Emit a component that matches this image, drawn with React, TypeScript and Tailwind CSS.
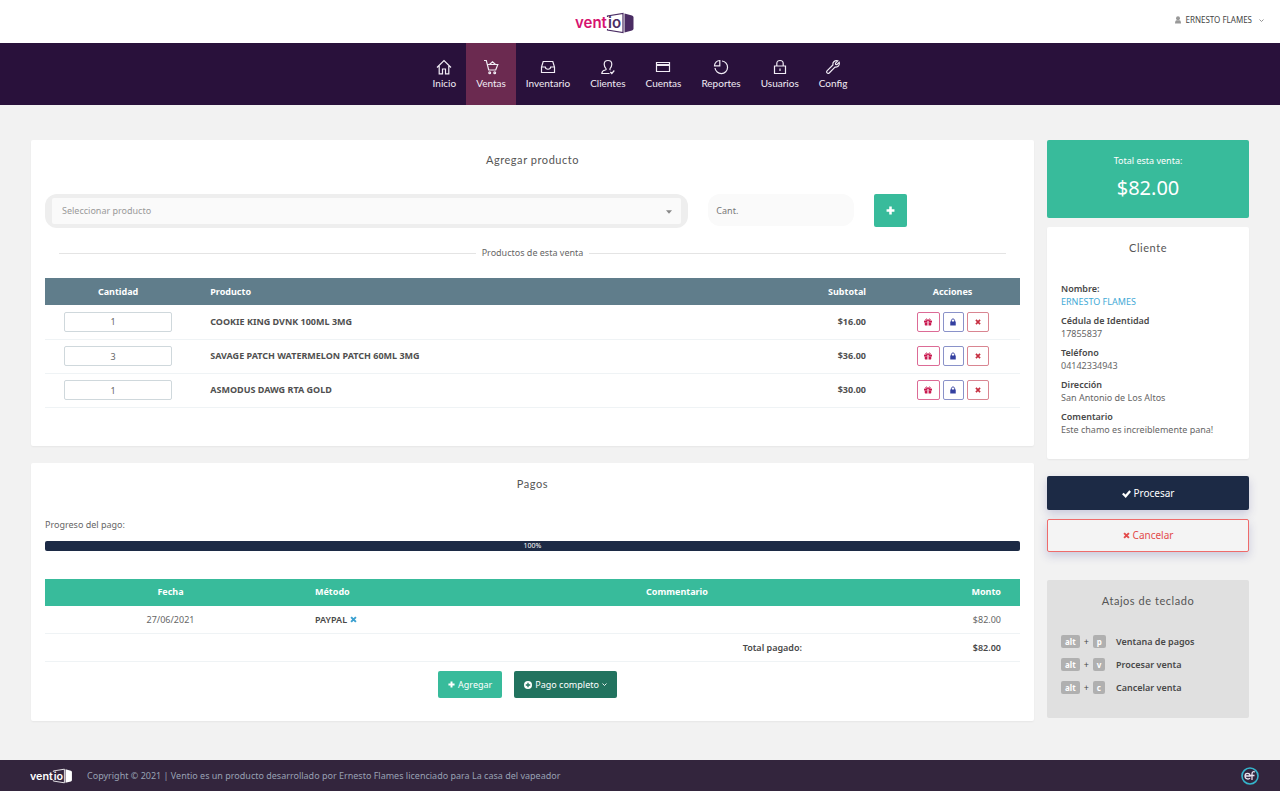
import type { ReactNode } from 'react'

interface Product {
  id: number
  quantity: number
  name: string
  subtotal: string
}

interface NavItem {
  label: string
  icon: ReactNode
  active?: boolean
}

const products: Product[] = [
  { id: 1, quantity: 1, name: 'COOKIE KING DVNK 100ML 3MG', subtotal: '$16.00' },
  { id: 2, quantity: 3, name: 'SAVAGE PATCH WATERMELON PATCH 60ML 3MG', subtotal: '$36.00' },
  { id: 3, quantity: 1, name: 'ASMODUS DAWG RTA GOLD', subtotal: '$30.00' },
]

const shortcuts = [
  { key: 'p', label: 'Ventana de pagos' },
  { key: 'v', label: 'Procesar venta' },
  { key: 'c', label: 'Cancelar venta' },
]

const customer = [
  { label: 'Cédula de Identidad', value: '17855837' },
  { label: 'Teléfono', value: '04142334943' },
  { label: 'Dirección', value: 'San Antonio de Los Altos' },
  { label: 'Comentario', value: 'Este chamo es increiblemente pana!' },
]

const navItems: NavItem[] = [
  { label: 'Inicio', icon: <path d="M1 8.500 8 1.500l7 7M3.200 7v7.800h3.300V10h3v4.800h3.300V7" /> },
  {
    label: 'Ventas',
    active: true,
    icon: (
      <>
        <path d="M1 1.500h2.300l2.400 9.500h7L14.800 5.500H4.300M6.500 5.500 9.500 2.800l3 2.700" />
        <circle cx="6.700" cy="13.800" r="0.900" />
        <circle cx="11.700" cy="13.800" r="0.900" />
      </>
    ),
  },
  {
    label: 'Inventario',
    icon: <path d="M3.200 2.500h9.600l1.700 5.500v5.500h-13V8zM1.500 8H5.300c.3 3 5.100 3 5.400 0h3.800" />,
  },
  {
    label: 'Clientes',
    icon: (
      <path d="M14.300 11.500 11.800 14.500 10.300 13M9.500 14.500H1.800c0-2.500 1.200-3 3.400-3.500 1-.3 1.200-.8.700-1.500C4.700 8 4.200 6.700 4.200 5.300 4.200 3 5.700 1.500 8 1.500s3.800 1.500 3.800 3.800c0 1.400-.5 2.700-1.700 4.200-.4.600-.3 1.100.4 1.400" />
    ),
  },
  { label: 'Cuentas', icon: <path d="M1.500 3.500h13v9h-13zM1.500 5.500h13M1.500 6.500h13" /> },
  {
    label: 'Reportes',
    icon: <path d="M9 2a6.300 6.300 0 1 1-7 7M6.800 1.500v5.300H1.500a5.300 5.300 0 0 1 5.300-5.300z" />,
  },
  {
    label: 'Usuarios',
    icon: <path d="M2.500 7h11v7.500h-11zM4.800 7V4.500c0-4 6.400-4 6.400 0V7M8 9.500v2.500" />,
  },
  {
    label: 'Config',
    icon: (
      <path d="M12.800 1.900 10.500 4.200l.2 1.200 1.200.2 2.300-2.300c.9 2.800-1.200 5.400-4.200 4.800L4.200 14c-1.500 1.300-3.500-.7-2.200-2.200L7.900 6C7.300 3 9.900.9 12.800 1.900z" />
    ),
  },
]

function Cross({ className }: { className: string }) {
  return (
    <svg viewBox="0 0 16 16" className={className} fill="none" stroke="currentColor" strokeWidth="4.500" aria-hidden="true">
      <path d="M2.500 2.500l11 11M13.500 2.500l-11 11" />
    </svg>
  )
}

function Plus({ className }: { className: string }) {
  return (
    <svg viewBox="0 0 16 16" className={className} fill="none" stroke="currentColor" strokeWidth="4.500" aria-hidden="true">
      <path d="M8 1v14M1 8h14" />
    </svg>
  )
}

function Chevron({ className }: { className: string }) {
  return (
    <svg viewBox="0 0 10 10" className={className} fill="none" stroke="currentColor" strokeWidth="1.800" aria-hidden="true">
      <path d="M1 3l4 4 4-4" />
    </svg>
  )
}

function Gift() {
  return (
    <svg viewBox="0 0 16 16" className="size-2" fill="currentColor" aria-hidden="true">
      <path d="M1 5h5.500v4H0V6zM9.500 5H15l1 1v3H9.500zM1.500 9.500h5V15h-4l-1-1zM9.500 9.500h5V14l-1 1h-4z" />
      <path d="M6.500 5h3v10h-3z" fillOpacity="0.35" />
      <path d="M8 5C6.500 1.500 3.500 1 3.500 3.300 3.500 5 6 5 8 5s4.500 0 4.500-1.700C12.500 1 9.500 1.500 8 5z" fill="none" stroke="currentColor" strokeWidth="1.800" />
    </svg>
  )
}

function Lock() {
  return (
    <svg viewBox="0 0 16 16" className="size-2" fill="currentColor" aria-hidden="true">
      <path d="M2.500 7h11v8h-11z" />
      <path d="M4.800 8V5c0-4 6.400-4 6.400 0v3" fill="none" stroke="currentColor" strokeWidth="2" />
    </svg>
  )
}

function Logo({ className, main, accent }: { className: string; main: string; accent: string }) {
  return (
    <svg viewBox="0 0 60 22" className={className} role="img" aria-label="ventio">
      <text x="0" y="16" fontFamily="Inter, sans-serif" fontSize="15" fontWeight="600" fill={accent}>
        vent
      </text>
      <text x="33" y="16" fontFamily="Inter, sans-serif" fontSize="15" fontWeight="600" fill={main}>
        io
      </text>
      <path d="M32.500 5V4L48 1.500v19L32.500 18v-1" fill="none" stroke={main} strokeWidth="1.200" />
      <path d="M49.500 1.500 57 3.500q1.500.5 1.500 2v11q0 1.500-1.500 2l-7.500 2z" fill={main} />
    </svg>
  )
}

function CardTitle({ children }: { children: ReactNode }) {
  return <h2 className="text-center font-[Lato,sans-serif] text-[11px] leading-4 tracking-wider text-[#555]">{children}</h2>
}

function Header() {
  return (
    <header>
      <div className="relative flex h-[43px] items-center justify-center bg-white pr-[70px]">
        <a href="#inicio" className="block pt-[2px]">
          <Logo className="h-[22px] w-[60px]" main="#4a2c63" accent="#d6136f" />
        </a>
        <button type="button" className="absolute right-4 top-3 flex h-4 items-center text-[8px] text-[#444]">
          <svg viewBox="0 0 16 16" className="mr-[3px] size-2 text-[#999]" fill="currentColor" aria-hidden="true">
            <circle cx="8" cy="4.500" r="4" />
            <path d="M2 15c0-4 1-6 3-6.500h6c2 .5 3 2.500 3 6.500z" />
          </svg>
          ERNESTO FLAMES
          <Chevron className="ml-[7px] size-[5px] text-[#888]" />
        </button>
      </div>
      <nav className="flex h-[62px] justify-center bg-[#29113b]">
        {navItems.map((item) => (
          <a
            key={item.label}
            href={`#${item.label.toLowerCase()}`}
            className={`flex flex-col items-center px-[10px] pt-4 text-[#f1ecf5] ${item.active ? 'bg-[#6b2a50]' : ''}`}
          >
            <svg viewBox="0 0 16 16" className="size-4" fill="none" stroke="currentColor" strokeWidth="1.200" aria-hidden="true">
              {item.icon}
            </svg>
            <span className="font-[Lato,sans-serif] text-[10px] leading-4">{item.label}</span>
          </a>
        ))}
      </nav>
    </header>
  )
}

function ProductsCard() {
  return (
    <section className="rounded-xs bg-white px-[14px] pt-3 pb-[38px] shadow-xs">
      <CardTitle>Agregar producto</CardTitle>
      <form className="mt-[26px] grid grid-cols-12 gap-5">
        <div className="relative col-span-8 rounded-xl bg-[#eee] px-[7px] py-1">
          <select
            aria-label="Producto"
            className="block h-[26px] w-full appearance-none rounded-xs bg-[#fafafa] px-[10px] text-[9px] text-[#999]"
          >
            <option>Seleccionar producto</option>
          </select>
          <svg viewBox="0 0 10 6" className="pointer-events-none absolute right-4 top-4 h-1 w-[6px] text-[#888]" fill="currentColor" aria-hidden="true">
            <path d="M0 0h10L5 6z" />
          </svg>
        </div>
        <input
          type="text"
          aria-label="Cantidad"
          placeholder="Cant."
          className="col-span-2 h-8 w-full rounded-xl bg-[#fafafa] px-2 text-[9px] text-[#666] placeholder:text-[#777]"
        />
        <button type="button" aria-label="Agregar producto" className="flex size-[33px] items-center justify-center rounded-xs bg-[#38bb9b] text-white">
          <Plus className="size-[9px]" />
        </button>
      </form>
      <div className="mx-[14px] mt-[17px] flex items-center gap-[6px] text-[9px] leading-4 text-[#666]">
        <span className="h-px flex-1 bg-[#e4e4e4]" />
        <h3>Productos de esta venta</h3>
        <span className="h-px flex-1 bg-[#e4e4e4]" />
      </div>
      <table className="mt-[17px] w-full table-fixed text-[9px]">
        <thead className="bg-[#607d8b] text-white">
          <tr className="h-[27px]">
            <th className="w-[15%] px-[19px]">Cantidad</th>
            <th className="px-[19px] text-left">Producto</th>
            <th className="w-[12%] px-[19px] text-right">Subtotal</th>
            <th className="w-[135px]">Acciones</th>
          </tr>
        </thead>
        <tbody className="font-bold text-[#505050]">
          {products.map((product) => (
            <tr key={product.id} className="h-[34px] border-b border-[#eff3f5]">
              <td className="px-[19px]">
                <input
                  type="text"
                  aria-label={`Cantidad de ${product.name}`}
                  defaultValue={product.quantity}
                  className="block h-5 w-full rounded-xs border border-[#cfd8dc] pr-[10px] text-center font-normal text-[#666]"
                />
              </td>
              <td className="px-[19px]">{product.name}</td>
              <td className="px-[19px] text-right">{product.subtotal}</td>
              <td>
                <div className="flex justify-center gap-[3px]">
                  <button type="button" aria-label="Regalar" className="flex h-5 w-[23px] items-center justify-center rounded-xs border border-[#dc6b96] text-[#c9184f]">
                    <Gift />
                  </button>
                  <button type="button" aria-label="Bloquear" className="flex h-5 w-[21px] items-center justify-center rounded-xs border border-[#8a92c9] text-[#3440a0]">
                    <Lock />
                  </button>
                  <button type="button" aria-label="Eliminar" className="flex h-5 w-[22px] items-center justify-center rounded-xs border border-[#d98591] text-[#c62f40]">
                    <Cross className="size-[6px]" />
                  </button>
                </div>
              </td>
            </tr>
          ))}
        </tbody>
      </table>
    </section>
  )
}

function PaymentsCard() {
  return (
    <section className="rounded-xs bg-white px-[14px] pt-[13px] pb-[23px] shadow-xs">
      <CardTitle>Pagos</CardTitle>
      <p className="mt-[25px] text-[9px] leading-4 text-[#666]">Progreso del pago:</p>
      <div
        role="progressbar"
        aria-label="Progreso del pago"
        aria-valuenow={100}
        className="mt-2 h-[10px] rounded-xs bg-[#1c2a45] text-center text-[7px] leading-[10px] text-white"
      >
        100%
      </div>
      <table className="mt-7 w-full table-fixed text-[9px] text-[#484848]">
        <thead className="bg-[#38bb9b] text-white">
          <tr className="h-[27px]">
            <th className="w-[251px]">Fecha</th>
            <th className="w-[237px] px-[19px] text-left">Método</th>
            <th>Commentario</th>
            <th className="w-[199px] px-[19px] text-right">Monto</th>
          </tr>
        </thead>
        <tbody>
          <tr className="h-7 border-b border-[#eff3f5] text-[#666]">
            <td className="text-center">27/06/2021</td>
            <td className="px-[19px] font-semibold text-[#484848]">
              <span className="flex items-center gap-[3px]">
                PAYPAL
                <button type="button" aria-label="Eliminar pago" className="text-[#3aa0d0]">
                  <Cross className="size-[7px]" />
                </button>
              </span>
            </td>
            <td />
            <td className="px-[19px] text-right">$82.00</td>
          </tr>
          <tr className="h-7 border-b border-[#eff3f5] font-semibold">
            <td colSpan={3} className="px-[19px] text-right">Total pagado:</td>
            <td className="px-[19px] text-right">$82.00</td>
          </tr>
        </tbody>
      </table>
      <div className="mt-[9px] flex justify-center gap-3 pr-[10px] text-[9px] text-white">
        <button type="button" className="flex h-[27px] items-center gap-[3px] rounded-xs bg-[#38bb9b] px-[10px]">
          <Plus className="size-[7px]" />
          Agregar
        </button>
        <button type="button" className="flex h-[27px] items-center gap-[3px] rounded-xs bg-[#22735f] px-[10px]">
          <svg viewBox="0 0 16 16" className="size-2" aria-hidden="true">
            <circle cx="8" cy="8" r="8" fill="currentColor" />
            <path d="M8 3.500v9M3.500 8h9" fill="none" stroke="#22735f" strokeWidth="2.600" />
          </svg>
          Pago completo
          <Chevron className="size-[5px]" />
        </button>
      </div>
    </section>
  )
}

function Sidebar() {
  return (
    <aside className="w-[202px] shrink-0 text-[9px]">
      <section className="h-[78px] rounded-xs bg-[#38bb9b] pt-[13px] text-center text-white">
        <p className="leading-4">Total esta venta:</p>
        <p className="mt-1 text-[20px] leading-[30px]">$82.00</p>
      </section>
      <section className="mt-[9px] rounded-xs bg-white px-[14px] pt-[13px] pb-[17px] shadow-xs">
        <CardTitle>Cliente</CardTitle>
        <dl className="mt-[26px] leading-[13px] text-[#666]">
          <dt className="font-semibold text-[#484848]">Nombre:</dt>
          <dd className="mb-[6px]">
            <a href="#cliente" className="text-[#3fa9d6]">ERNESTO FLAMES</a>
          </dd>
          {customer.map((field) => (
            <div key={field.label} className="mb-[6px]">
              <dt className="font-semibold text-[#484848]">{field.label}</dt>
              <dd>{field.value}</dd>
            </div>
          ))}
        </dl>
      </section>
      <button type="button" className="mt-[17px] flex h-[34px] w-full items-center justify-center gap-[3px] rounded-xs bg-[#1c2a45] text-[10px] text-white shadow-[0_4px_10px_#c9c9dc]">
        <svg viewBox="0 0 16 16" className="size-[9px]" fill="none" stroke="currentColor" strokeWidth="4" aria-hidden="true">
          <path d="M1.500 8l5 5 8-9.500" />
        </svg>
        Procesar
      </button>
      <button type="button" className="mt-[9px] flex h-[33px] w-full items-center justify-center gap-[3px] rounded-xs border border-[#ee6b6b] bg-[#f4f4f4] text-[10px] text-[#e34b4b] shadow-[0_4px_10px_#c9c9dc]">
        <Cross className="size-[7px]" />
        Cancelar
      </button>
      <section className="mt-7 rounded-xs bg-[#e0e0e0] px-[14px] pt-[13px] pb-[19px]">
        <CardTitle>Atajos de teclado</CardTitle>
        <ul className="mt-[21px]">
          {shortcuts.map((shortcut) => (
            <li key={shortcut.key} className="flex h-[23px] items-center text-[#484848]">
              <span className="flex w-[55px] items-center gap-1">
                <kbd className="rounded-xs bg-[#b0b0b0] px-1 font-[Noto_Sans,sans-serif] text-[8px] font-bold leading-[13px] text-white">alt</kbd>
                +
                <kbd className="rounded-xs bg-[#b0b0b0] px-1 font-[Noto_Sans,sans-serif] text-[8px] font-bold leading-[13px] text-white">{shortcut.key}</kbd>
              </span>
              <span className="font-semibold">{shortcut.label}</span>
            </li>
          ))}
        </ul>
      </section>
    </aside>
  )
}

function Footer() {
  return (
    <footer className="flex h-[31px] items-center bg-[#33253d] pr-[21px] pl-[30px] text-[9px] text-[#98a1b3]">
      <Logo className="h-4 w-[43px]" main="#ffffff" accent="#ffffff" />
      <p className="ml-[14px] flex-1">
        Copyright © 2021 | Ventio es un producto desarrollado por Ernesto Flames licenciado para La casa del vapeador
      </p>
      <svg viewBox="0 0 18 18" className="size-[18px]" role="img" aria-label="ef">
        <circle cx="9" cy="9" r="8" fill="none" stroke="#35b5cc" strokeWidth="1.600" />
        <path d="M4 9h5c0-3.600-5-3.600-5 0 0 3.500 4 3.500 5 2M14 5c-2-.8-3 0-3 2v6M9.500 8.500H13.500" fill="none" stroke="#e8e2ee" strokeWidth="1.300" />
      </svg>
    </footer>
  )
}

export default function App() {
  return (
    <div className="flex min-h-screen flex-col bg-[#f2f2f2] font-[Noto_Sans,sans-serif]">
      <Header />
      <main className="flex flex-1 items-start gap-[13px] px-[31px] pt-[35px] pb-[38px]">
        <div className="flex min-w-0 flex-1 flex-col gap-[17px]">
          <ProductsCard />
          <PaymentsCard />
        </div>
        <Sidebar />
      </main>
      <Footer />
    </div>
  )
}
